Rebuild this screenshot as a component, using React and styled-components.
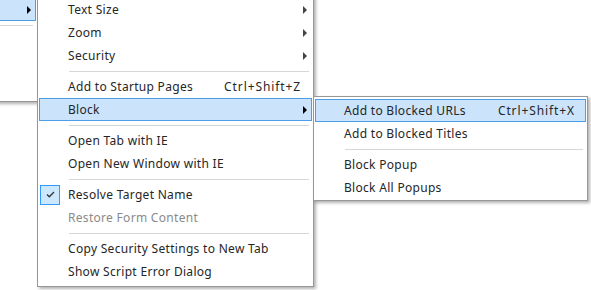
import React from "react";
import styled, { createGlobalStyle } from "styled-components";

const GlobalStyle = createGlobalStyle`
  html, body {
    margin: 0;
    padding: 0;
    background: #fff;
  }
  body {
    font-family: "Noto Sans", "Liberation Sans", sans-serif;
  }
`;

const Desktop = styled.div`
  position: relative;
  width: 591px;
  height: 290px;
  overflow: hidden;
  background: #fff;
`;

const Menu = styled.div`
  position: absolute;
  left: ${props => props.left}px;
  top: ${props => props.top}px;
  width: ${props => props.width}px;
  box-sizing: border-box;
  display: flex;
  flex-direction: column;
  padding: ${props => props.pad || "3px 1px"};
  background: #fff;
  border: 1px solid #979797;
  box-shadow: 2px 2px 3px rgba(0, 0, 0, 0.3);
  font-size: 12px;
  letter-spacing: 0.3px;
  color: #262626;
`;

const Item = styled.div`
  display: flex;
  align-items: center;
  height: 23px;
  box-sizing: border-box;
  border: 1px solid ${props => (props.active ? "#4d9de8" : "transparent")};
  background: ${props => (props.active ? "#cbe4fb" : "transparent")};
  color: ${props => (props.disabled ? "#8a8a8a" : "inherit")};
  white-space: nowrap;
`;

const CheckSlot = styled.div`
  width: 28px;
  height: 100%;
  display: flex;
  align-items: center;
  flex-shrink: 0;
`;

const CheckBox = styled.div`
  width: 20px;
  height: 20px;
  box-sizing: border-box;
  border: 1px solid #3399ff;
  background: #cce8ff;
  display: flex;
  align-items: center;
  justify-content: center;
`;

const Label = styled.span`
  flex: 1;
`;

const Shortcut = styled.span`
  flex-shrink: 0;
  letter-spacing: 0.9px;
`;

const ArrowSlot = styled.div`
  width: 10px;
  display: flex;
  justify-content: flex-end;
  padding-right: 4px;
  box-sizing: border-box;
  flex-shrink: 0;
`;

const Arrow = styled.div`
  width: 0;
  height: 0;
  border-left: 4px solid ${props => (props.dark ? "#000" : "#444")};
  border-top: 4px solid transparent;
  border-bottom: 4px solid transparent;
`;

const Separator = styled.div`
  height: 1px;
  margin: 4px 3px 3px 30px;
  background: #d7d7d7;
`;

const Check = () => (
  <svg width="9" height="7" viewBox="0 0 9 7">
    <polyline
      points="1,3.5 3.3,5.8 8,1"
      fill="none"
      stroke="#333"
      strokeWidth="1.3"
    />
  </svg>
);

const MenuItem = ({ label, shortcut, sub, active, checked, disabled }) => (
  <Item active={active} disabled={disabled}>
    <CheckSlot>
      {checked && (
        <CheckBox>
          <Check />
        </CheckBox>
      )}
    </CheckSlot>
    <Label>{label}</Label>
    {shortcut && <Shortcut>{shortcut}</Shortcut>}
    <ArrowSlot>{sub && <Arrow dark={active} />}</ArrowSlot>
  </Item>
);

export default function App() {
  return (
    <Desktop>
      <GlobalStyle />

      {/* parent menu, mostly off-screen to the left */}
      <Menu left={-200} top={-6} width={238}>
        <MenuItem sub active />
        <Separator />
        <MenuItem />
        <MenuItem />
        <MenuItem />
      </Menu>

      <Menu left={37} top={-6} width={277}>
        <MenuItem label="Text Size" sub />
        <MenuItem label="Zoom" sub />
        <MenuItem label="Security" sub />
        <Separator />
        <MenuItem label="Add to Startup Pages" shortcut="Ctrl+Shift+Z" />
        <MenuItem label="Block" sub active />
        <Separator />
        <MenuItem label="Open Tab with IE" />
        <MenuItem label="Open New Window with IE" />
        <Separator />
        <MenuItem label="Resolve Target Name" checked />
        <MenuItem label="Restore Form Content" disabled />
        <Separator />
        <MenuItem label="Copy Security Settings to New Tab" />
        <MenuItem label="Show Script Error Dialog" />
      </Menu>

      <Menu left={313} top={96} width={275} pad="2px 1px 1px">
        <MenuItem label="Add to Blocked URLs" shortcut="Ctrl+Shift+X" active />
        <MenuItem label="Add to Blocked Titles" />
        <Separator />
        <MenuItem label="Block Popup" />
        <MenuItem label="Block All Popups" />
      </Menu>
    </Desktop>
  );
}
